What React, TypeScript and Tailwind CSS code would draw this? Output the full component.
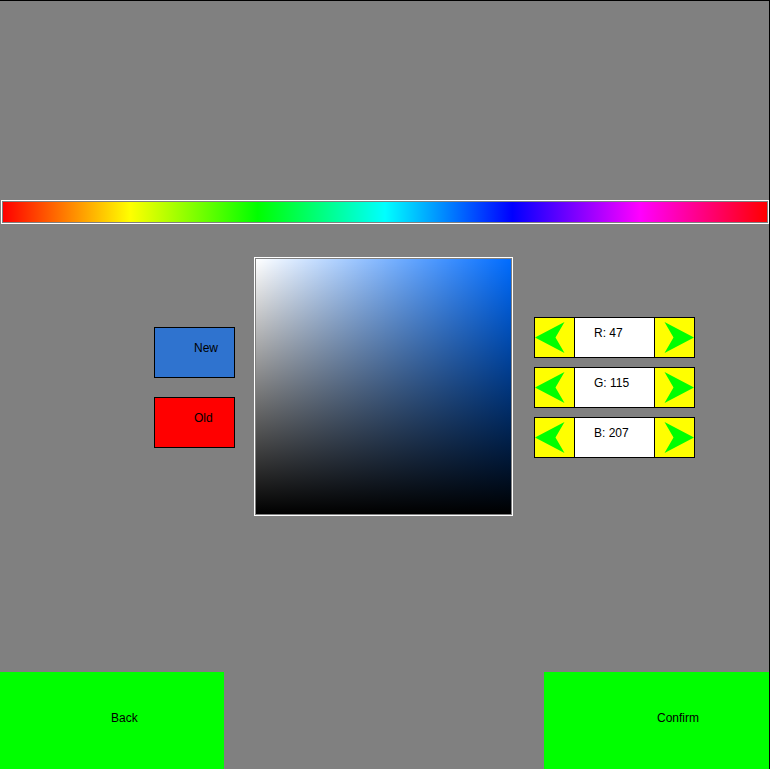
const rows = [
  { label: 'R', value: 47 },
  { label: 'G', value: 115 },
  { label: 'B', value: 207 },
];

function LeftArrow() {
  return (
    <svg width="39" height="39" viewBox="0 0 39 39">
      <polygon points="0,19.5 29.5,4 20.5,19.5 29.5,35" fill="#00ff00" />
    </svg>
  );
}

function RightArrow() {
  return (
    <svg width="39" height="39" viewBox="0 0 39 39">
      <polygon points="39,19.5 9.5,4 18.5,19.5 9.5,35" fill="#00ff00" />
    </svg>
  );
}

function Spinner({ label, value }: { label: string; value: number }) {
  return (
    <div className="flex w-[161px] h-[41px] border border-black bg-black gap-px">
      <button className="w-[39px] h-[39px] bg-[#ffff00]">
        <LeftArrow />
      </button>
      <div className="w-[79px] h-[39px] bg-white pl-[19px] pt-[9px] leading-[12px]">
        {label}: {value}
      </div>
      <button className="w-[39px] h-[39px] bg-[#ffff00]">
        <RightArrow />
      </button>
    </div>
  );
}

export default function ColorPicker() {
  return (
    <div
      className="w-[770px] h-[769px] bg-[#808080] border-t border-r border-black flex flex-col text-[12px] text-black"
      style={{ fontFamily: '"Liberation Sans", Arial, sans-serif' }}
    >
      {/* hue strip */}
      <div className="mt-[199px] ml-px w-[768px] h-[24px] border border-white p-px">
        <div className="h-full bg-[linear-gradient(to_right,#ff0000,#ffff00,#00ff00,#00ffff,#0000ff,#ff00ff,#ff0000)]" />
      </div>

      <div className="flex items-start mt-[33px] pl-[154px]">
        <div className="flex flex-col gap-[19px] mt-[70px]">
          <div className="w-[81px] h-[51px] border border-black bg-[#2f73cf] pl-[39px] pt-[14px] leading-[12px]">New</div>
          <div className="w-[81px] h-[51px] border border-black bg-[#ff0000] pl-[39px] pt-[14px] leading-[12px]">Old</div>
        </div>

        {/* saturation / value square */}
        <div className="ml-[19px] w-[259px] h-[259px] border border-white p-px">
          <div className="relative w-full h-full bg-[#006cff]">
            <div className="absolute inset-0 bg-[linear-gradient(to_right,#ffffff,rgba(255,255,255,0))]" />
            <div className="absolute inset-0 bg-[linear-gradient(to_bottom,rgba(0,0,0,0),#000000)]" />
          </div>
        </div>

        <div className="ml-[21px] mt-[60px] flex flex-col gap-[9px]">
          {rows.map((r) => (
            <Spinner key={r.label} label={r.label} value={r.value} />
          ))}
        </div>
      </div>

      <div className="mt-auto flex justify-between">
        <button className="w-[224px] h-[97px] bg-[#00ff00] text-left pl-[111px] pt-[40px] leading-[12px] flex items-start">Back</button>
        <button className="w-[225px] h-[97px] bg-[#00ff00] text-left pl-[113px] pt-[40px] leading-[12px] flex items-start">Confirm</button>
      </div>
    </div>
  );
}
